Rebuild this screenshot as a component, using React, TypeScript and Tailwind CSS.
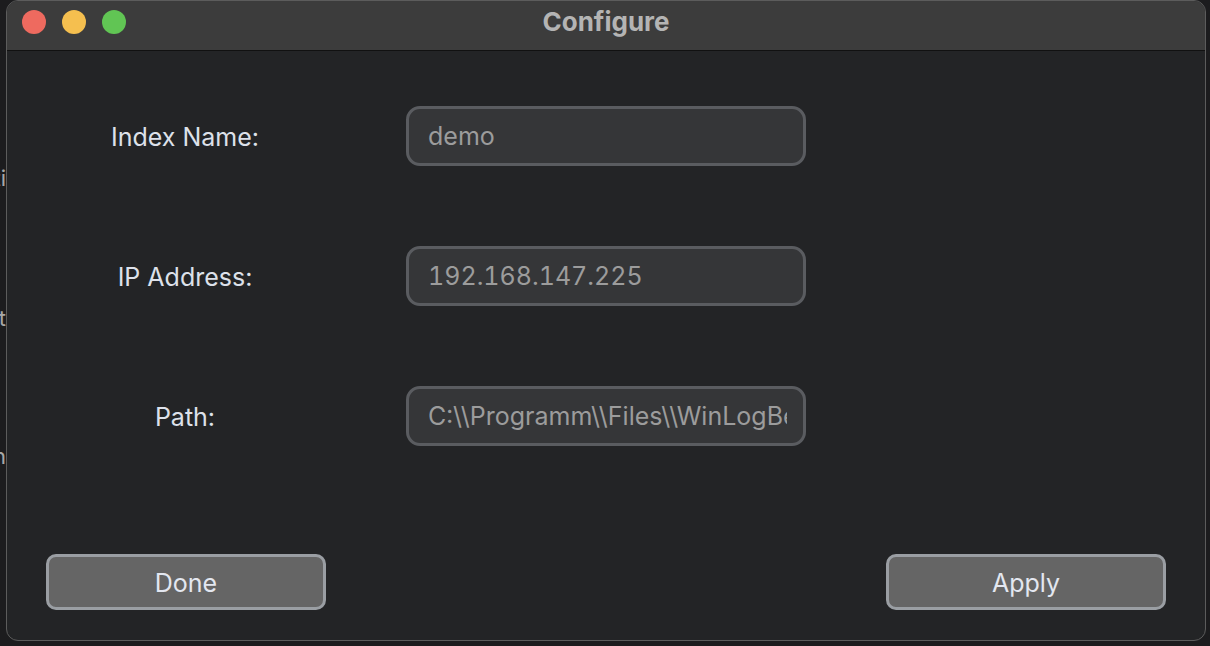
const rows = [
  { label: "Index Name:", value: "demo" },
  { label: "IP Address:", value: "192.168.147.225" },
  { label: "Path:", value: String.raw`C:\\Programm\\Files\\WinLogBeat\\winlogbeat.exe` },
]

const Field = ({ label, value }: { label: string; value: string }) => (
  <div className="flex items-center">
    <div className="w-[278px] pt-[4px] text-center text-[25px] text-[#dde1ea]">{label}</div>
    <input
      readOnly
      value={value}
      className="ml-[82px] w-[400px] h-[60px] rounded-[14px] border-[3px] border-[#5a5c60] bg-[#353638] pl-[19px] pr-[16px] text-[25px] tabular-nums text-[#9c9c9c] outline-none"
    />
  </div>
)

export default function App() {
  return (
    <div
      className="w-[1210px] h-[646px] bg-[#1c1c1e] flex overflow-hidden"
      style={{ fontFamily: "Inter, 'Noto Sans', sans-serif" }}
    >
      {/* app behind the dialog, only its edge shows */}
      <div className="w-[6px] shrink-0 relative overflow-hidden text-[22px] text-[#a8a8a8]">
        <div className="absolute right-0 top-[162px] whitespace-nowrap">Connecti</div>
        <div className="absolute right-0 top-[302px] whitespace-nowrap">Bat</div>
        <div className="absolute right-0 top-[440px] whitespace-nowrap">Run</div>
      </div>

      <div className="w-[1200px] h-[641px] shrink-0 rounded-[12px] border border-[#5c5c5c] bg-[#232426] flex flex-col overflow-hidden">
        <div className="h-[50px] shrink-0 bg-[#3c3c3c] border-b border-[#111111] relative flex items-center justify-center">
          <div className="absolute left-[15px] top-[9px] flex gap-[16px]">
            <span className="w-[24px] h-[24px] rounded-full bg-[#ee6a5f]" />
            <span className="w-[24px] h-[24px] rounded-full bg-[#f5bf4f]" />
            <span className="w-[24px] h-[24px] rounded-full bg-[#61c554]" />
          </div>
          <span className="text-[26px] font-bold text-[#b4b4b4] -mt-[8px]">Configure</span>
        </div>

        <div className="flex flex-col gap-[80px] pl-[39px] pt-[55px]">
          {rows.map((r) => (
            <Field key={r.label} label={r.label} value={r.value} />
          ))}
        </div>

        <div className="flex justify-between pl-[39px] pr-[39px] mt-[108px]">
          <button className="w-[280px] h-[56px] pt-[3px] rounded-[10px] border-[3px] border-[#9a9ea3] bg-[#656565] text-[25px] text-[#e3e7f0]">
            Done
          </button>
          <button className="w-[280px] h-[56px] pt-[3px] rounded-[10px] border-[3px] border-[#9a9ea3] bg-[#656565] text-[25px] text-[#e3e7f0]">
            Apply
          </button>
        </div>
      </div>
    </div>
  )
}
